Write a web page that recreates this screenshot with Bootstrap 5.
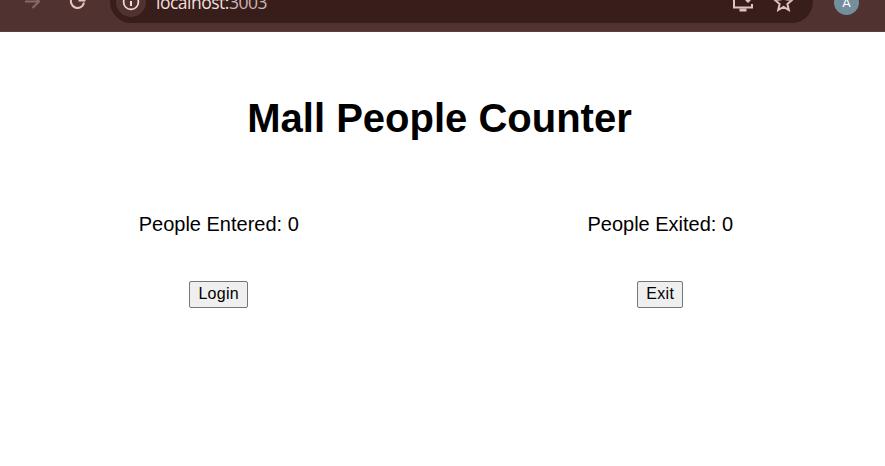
<!DOCTYPE html>
<html lang="en">
<head>
<meta charset="utf-8">
<meta name="viewport" content="width=device-width, initial-scale=1">
<title>Mall People Counter</title>
<link href="https://cdn.jsdelivr.net/npm/bootstrap@5.3.0/dist/css/bootstrap.min.css" rel="stylesheet">
<style>
body { font-family: "Liberation Sans", Arial, sans-serif; color: #000; background: #fff; }
.chrome-clip { height: 32px; background: #503331; box-shadow: inset 0 -1px #5b403e; }
.chrome-bar { height: 60px; padding-left: 20px; padding-right: 26px; }
.chrome-bar svg { display: block; flex: none; fill: none; stroke-width: 2; }
.nav-arrow { stroke: #896a69; }
.nav-reload { stroke: #eac3bd; margin-left: 21px; }
.omnibox { height: 42px; width: 703px; margin-left: 21px; padding: 0 18px 0 6px; border-radius: 21px; background: #381e1b; }
.site-info { width: 30px; height: 30px; background: #503331; stroke: #f2dedb; }
.address { margin-left: 10px; font: 17.5px/24px "Open Sans", "Noto Sans", sans-serif; color: #f1dfdc; letter-spacing: -.5px; }
.address span { color: #ccb4b1; }
.tool-icon { stroke: #dec3c0; }
.avatar { width: 25px; height: 25px; margin-left: 21px; background: #738f9b; color: #fff; font: 13px/25px Roboto, sans-serif; }
.page-body { width: 883px; margin-left: -2px; padding-top: 62px; }
.page-title { font-size: 40px; line-height: 48px; font-weight: 700; }
.counter { font-size: 20px; line-height: 24px; margin: 70px 0 45px; }
.plain-btn { font-size: 16px; line-height: 18px; padding: 3px 8px 4px; height: 27px; color: #000; background: #efefef; border: 1px solid #767676; border-radius: 2px; letter-spacing: .3px; }
</style>
<script src="https://cdn.jsdelivr.net/npm/bootstrap@5.3.0/dist/js/bootstrap.bundle.min.js"></script>
</head>
<body class="overflow-hidden">
<header class="chrome-clip d-flex align-items-end overflow-hidden">
  <div class="chrome-bar d-flex align-items-center w-100 flex-shrink-0">
    <svg class="nav-arrow" width="24" height="24" viewBox="0 0 24 24"><path d="M5 11.500H19M12.500 5L19 11.500L12.500 18"/></svg>
    <svg class="nav-reload" width="24" height="24" viewBox="0 0 24 24"><path d="M19 12.500A6.600 6.600 0 1 1 17 6.500L19 8.500M19.500 4V10.500H13.500"/></svg>
    <div class="omnibox d-flex align-items-center flex-shrink-0">
      <div class="site-info rounded-circle d-flex align-items-center justify-content-center flex-shrink-0">
        <svg width="20" height="20" viewBox="0 0 20 20"><circle cx="10" cy="10" r="7.400" stroke-width="1.700"/><path d="M10 9V14M10 6V8"/></svg>
      </div>
      <div class="address">localhost:<span>3003</span></div>
      <svg class="tool-icon ms-auto" width="24" height="24" viewBox="0 0 24 24"><path d="M12 4H3V17.500H21V14"/><path d="M12 8H22L17 13ZM15.500 3H18.500V8H15.500Z" fill="#dec3c0" stroke="none"/><path d="M8.500 20H15.500" stroke-width="3"/></svg>
      <svg class="tool-icon ms-3" width="24" height="24" viewBox="0 0 24 24"><path d="M12.500 4L14.900 9.400L21 10L16.400 14L17.800 20L12.500 16.800L7.200 20L8.600 14L4 10L10.100 9.400Z"/></svg>
    </div>
    <div class="avatar rounded-circle text-center flex-shrink-0">A</div>
  </div>
</header>
<main class="page-body text-center">
  <h1 class="page-title m-0">Mall People Counter</h1>
  <div class="row g-0">
    <section class="col-6">
      <p class="counter">People Entered: 0</p>
      <button type="button" class="plain-btn">Login</button>
    </section>
    <section class="col-6">
      <p class="counter">People Exited: 0</p>
      <button type="button" class="plain-btn">Exit</button>
    </section>
  </div>
</main>
</body>
</html>
